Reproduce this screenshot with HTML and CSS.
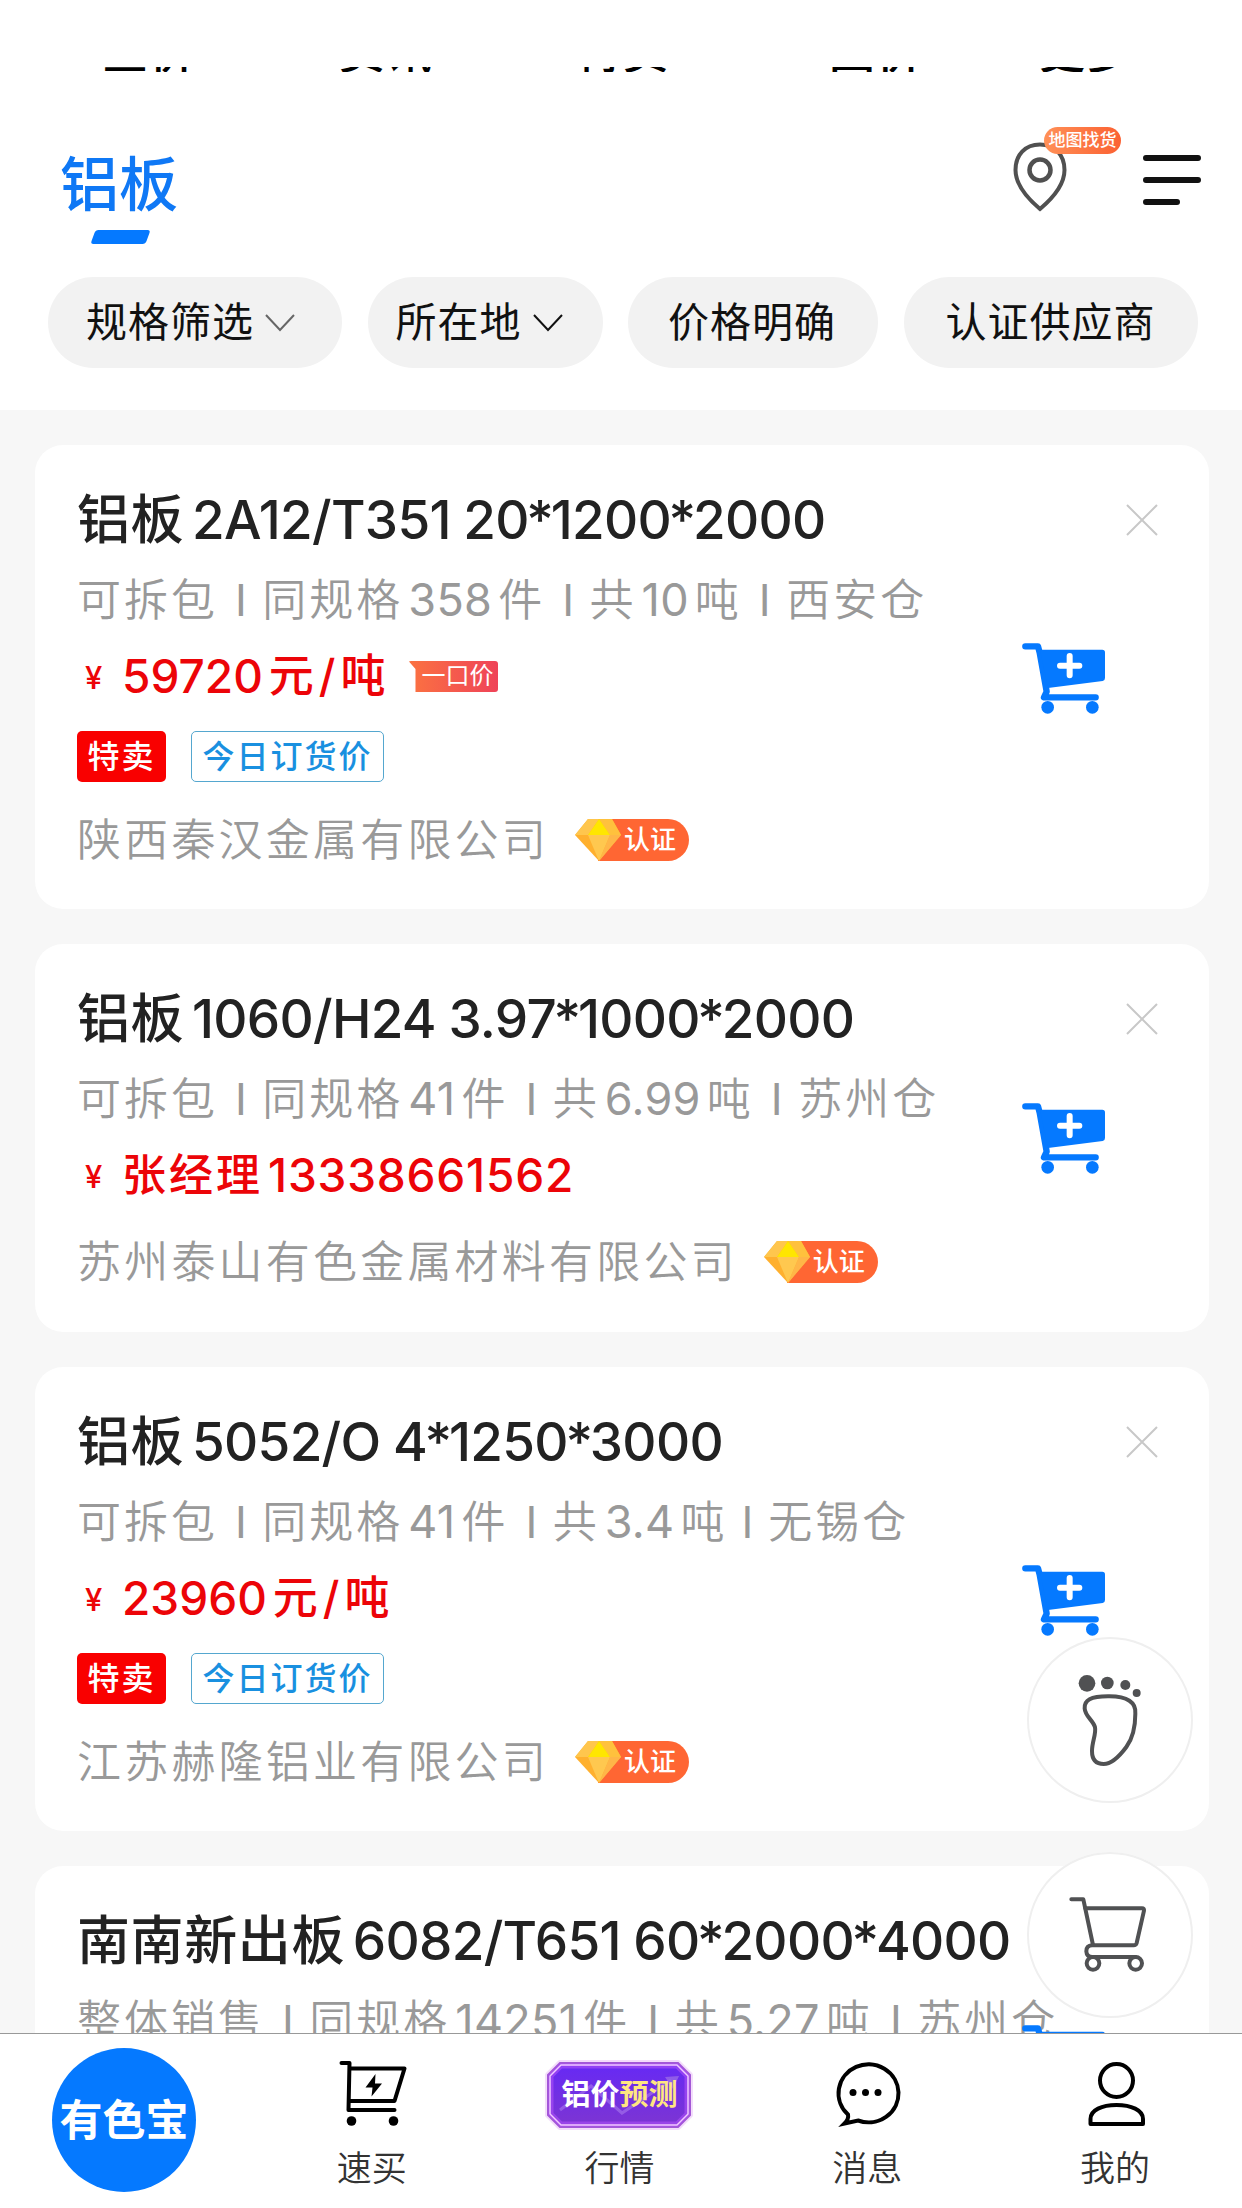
FILE: index.html
```html
<!DOCTYPE html>
<html lang="zh-CN">
<head>
<meta charset="utf-8">
<title>铝板</title>
<link rel="stylesheet" href="styles.css">
</head>
<body>
<svg width="0" height="0" class="defs">
  <defs>
    <symbol id="cart-add" viewBox="0 0 249 211">
      <path d="M10 9H48L53 28L74 145L66 162H221" fill="none" stroke="#0579ff" stroke-width="19" stroke-linecap="round" stroke-linejoin="round"/>
      <path d="M54 19H241Q249 19 249 27V104Q249 112 242 113L78 134Z" fill="#0579ff"/>
      <circle cx="77" cy="192" r="19" fill="#0579ff"/><circle cx="211" cy="192" r="19" fill="#0579ff"/>
      <path d="M143 38V96M114 67H172" stroke="#fff" stroke-width="18" stroke-linecap="round"/>
    </symbol>
    <symbol id="close" viewBox="0 0 32 32"><path d="M1 1L31 31M31 1L1 31" stroke="#c8c8c8" stroke-width="2"/></symbol>
    <symbol id="gem" viewBox="0 0 46 42">
      <path d="M13 0H37L46 16L24 42L0 16Z" fill="#ffb02e"/>
      <path d="M13 0L0 16H13L24 0Z" fill="#ffc64d"/><path d="M24 0H37L46 16H35Z" fill="#ffc13d"/>
      <path d="M24 0L35 16H13Z" fill="#ffe600"/><path d="M13 16H35L24 42Z" fill="#ffc84f"/>
      <path d="M35 16H46L24 42Z" fill="#ffb648"/>
    </symbol>
    <symbol id="chevron" viewBox="0 0 30 18"><path d="M1 1L15 16L29 1" fill="none" stroke="currentColor" stroke-width="2"/></symbol>
  </defs>
</svg>
<div class="app">
  <nav class="tabs"><span>查价</span><span>资讯</span><span>特卖</span><span>回价</span><span>更多</span></nav>
  <header class="header">
    <h1 class="category">铝板</h1>
    <div class="tools">
      <div class="map">
        <svg width="54" height="70" viewBox="0 0 54 70"><path d="M27 2.500C12 2.500 2.500 13 2.500 28C2.500 42 14 56 27 67C40 56 51.500 42 51.500 28C51.500 13 42 2.500 27 2.500Z" fill="none" stroke="#505050" stroke-width="4"/><circle cx="27" cy="28" r="10.500" fill="none" stroke="#505050" stroke-width="4.500"/></svg>
        <span class="map-badge">地图找货</span>
      </div>
      <svg class="menu" width="58" height="52" viewBox="0 0 58 52"><path d="M3 4H55M3 26H55M3 48H34" stroke="#111" stroke-width="6" stroke-linecap="round"/></svg>
    </div>
  </header>
  <div class="filters">
    <button class="chip chip-spec">规格筛选<svg class="chev soft"><use href="#chevron"/></svg></button>
    <button class="chip chip-place">所在地<svg class="chev"><use href="#chevron"/></svg></button>
    <button class="chip chip-price">价格明确</button>
    <button class="chip chip-cert">认证供应商</button>
  </div>
  <main class="list">
    <article class="card">
      <div class="body">
        <div class="head"><h2 class="title">铝板 <span>2A12/T351 20<i>*</i>1200<i>*</i>2000</span></h2><svg class="close"><use href="#close"/></svg></div>
        <p class="meta m1">可拆包<i>I</i>同规格<b>358</b>件<i>I</i>共<b>10</b>吨<i>I</i>西安仓</p>
        <p class="price"><small>¥</small><span class="amount">59720</span><span class="unit">元/吨</span><span class="fixed">一口价</span></p>
        <div class="tags"><span class="tag sale">特卖</span><span class="tag today">今日订货价</span></div>
        <div class="company">陕西秦汉金属有限公司<span class="cert"><svg class="gem"><use href="#gem"/></svg>认证</span></div>
      </div>
      <svg class="add"><use href="#cart-add"/></svg>
    </article>
    <article class="card">
      <div class="body">
        <div class="head"><h2 class="title">铝板 <span>1060/H24 3.97<i>*</i>1000<i>*</i>2000</span></h2><svg class="close"><use href="#close"/></svg></div>
        <p class="meta m2">可拆包<i>I</i>同规格<b>41</b>件<i>I</i>共<b>6.99</b>吨<i>I</i>苏州仓</p>
        <p class="price"><small>¥</small><span class="unit contact">张经理</span><span class="amount phone">13338661562</span></p>
        <div class="company">苏州泰山有色金属材料有限公司<span class="cert"><svg class="gem"><use href="#gem"/></svg>认证</span></div>
      </div>
      <svg class="add"><use href="#cart-add"/></svg>
    </article>
    <article class="card">
      <div class="body">
        <div class="head"><h2 class="title">铝板 <span>5052/O 4<i>*</i>1250<i>*</i>3000</span></h2><svg class="close"><use href="#close"/></svg></div>
        <p class="meta m3">可拆包<i>I</i>同规格<b>41</b>件<i>I</i>共<b>3.4</b>吨<i>I</i>无锡仓</p>
        <p class="price"><small>¥</small><span class="amount">23960</span><span class="unit">元/吨</span></p>
        <div class="tags"><span class="tag sale">特卖</span><span class="tag today">今日订货价</span></div>
        <div class="company">江苏赫隆铝业有限公司<span class="cert"><svg class="gem"><use href="#gem"/></svg>认证</span></div>
      </div>
      <svg class="add"><use href="#cart-add"/></svg>
    </article>
    <article class="card last">
      <div class="body">
        <div class="head"><h2 class="title">南南新出板 <span>6082/T651 60<i>*</i>2000<i>*</i>4000</span></h2></div>
        <p class="meta m4">整体销售<i>I</i>同规格<b>14251</b>件<i>I</i>共<b>5.27</b>吨<i>I</i>苏州仓</p>
      </div>
      <svg class="add"><use href="#cart-add"/></svg>
    </article>
  </main>
  <nav class="bar">
    <a class="item"><span class="logo">有色宝</span></a>
    <a class="item"><svg class="icon" width="70" height="68" viewBox="-1.500 0 70 68"><g fill="none" stroke="#000" stroke-width="4" stroke-linejoin="round" stroke-linecap="round"><path d="M3 3H11L10 50H56"/><path d="M12 8.500H66L56 41H11"/></g><circle cx="13" cy="61" r="4.800"/><circle cx="55" cy="61" r="4.800"/><path d="M37 14L27 27.500H34L33 36.500L43.500 23.500H36.500Z"/></svg>速买</a>
    <a class="item"><span class="forecast icon"><svg class="forecast-bg" width="152" height="74" viewBox="-4 -4 152 74"><defs><linearGradient id="violet" x1="0" y1="0" x2="0" y2="1"><stop offset="0" stop-color="#6629f5"/><stop offset="1" stop-color="#7d35d2"/></linearGradient></defs><path d="M13 1H131L143 13V53L131 65H13L1 53V13Z" fill="url(#violet)" stroke="#f3dcfb" stroke-width="6" stroke-linejoin="round"/><path d="M13 1H131L143 13V53L131 65H13L1 53V13Z" fill="url(#violet)" stroke="#a358d6" stroke-width="2"/><path d="M14 4H130L140 14V52L130 62H14L4 52V14Z" fill="none" stroke="#ad50f7" stroke-width="5" opacity=".6"/><path d="M14 3H130L141 14V52L130 63H14L3 52V14Z" fill="none" stroke="#f3c9ff" stroke-width="1.500"/><path d="M13 48L44 24L75 51L124 18" fill="none" stroke="#a878ec" stroke-width="3" opacity=".6"/><path d="M118 15L132 14L126 27Z" fill="#9a69e6" opacity=".8"/></svg><span class="forecast-text">铝价<em>预测</em></span></span>行情</a>
    <a class="item"><svg class="icon" width="70" height="68" viewBox="2 0 70 68"><path d="M18 54.500A30 29 0 1 1 28 60.500L14.500 63.500Q19 59 18 54.500Z" fill="none" stroke="#000" stroke-width="4"/><circle cx="23" cy="32.500" r="3.500"/><circle cx="35.500" cy="32.500" r="3.500"/><circle cx="48" cy="32.500" r="3.500"/></svg>消息</a>
    <a class="item"><svg class="icon" width="70" height="68" viewBox="-2 0 70 68"><g fill="none" stroke="#000" stroke-width="4"><circle cx="34.500" cy="20.500" r="16.500"/><path d="M8.500 64V59C8.500 50 20 45 34.500 45S61 50 61 59V64Z" stroke-linejoin="round"/></g></svg>我的</a>
  </nav>
  <a class="fab fab-history"><svg viewBox="0 0 498 498"><g fill="#505153"><circle cx="180" cy="139" r="25"/><circle cx="241" cy="138" r="19"/><circle cx="295" cy="144" r="15"/><circle cx="329" cy="168" r="12"/></g><path d="M173 214C172 190 190 178 243 178C302 177 328 197 325 230C325 265 320 300 298 330C275 361 253 381 230 381C205 381 195 365 195 342C195 315 208 290 204 271C199 250 174 238 173 214Z" fill="none" stroke="#505153" stroke-width="12"/></svg></a>
  <a class="fab fab-cart"><svg viewBox="0 0 498 498"><g fill="none" stroke="#505153" stroke-width="12" stroke-linejoin="round" stroke-linecap="round"><path d="M133 142H169L198 279"/><path d="M175 169H345Q352 169 351 176L329 273Q327 280 320 280H195Q178 281 178 298Q179 315 196 315H326"/><circle cx="198" cy="334" r="19"/><circle cx="326" cy="334" r="19"/></g></svg></a>
</div>
</body>
</html>
```
FILE: styles.css
```css
* { box-sizing: border-box; }
body { margin: 0; font-family: Inter, "Noto Sans CJK SC", sans-serif; background: #fff; color: #111; }
h1, h2, p { margin: 0; font-weight: 500; }
.defs { position: absolute; }
.app { position: relative; width: 1242px; height: 2208px; overflow: hidden; display: flex; flex-direction: column; padding-top: 67px; }

.tabs { flex: none; height: 5px; overflow: hidden; display: grid; grid-template-columns: 237px 236px 254px 210px 1fr; align-content: end; padding-left: 102px; font-size: 46px; line-height: 60px; font-weight: 500; letter-spacing: 1px; color: #000; }
.tabs span { height: 51px; }

.header { flex: none; height: 205px; display: flex; justify-content: space-between; padding: 0 41px 0 60px; }
.category { margin-top: 71px; font-size: 59px; line-height: 84px; height: 103px; color: #0f78f5; display: flex; flex-direction: column; }
.category::after { content: ""; flex: none; width: 55px; height: 14px; margin: 3px 0 0 33px; border-radius: 3px; background: #0579ff; transform: skewX(-20deg); }
.tools { display: flex; gap: 76px; }
.map { position: relative; margin-top: 70px; }
.map svg, .menu { display: block; }
.map-badge { position: absolute; left: 31px; top: -15px; width: 77px; height: 27px; border-radius: 14px; background: linear-gradient(90deg, #ff9057, #fb6132); color: #fff; font-size: 17px; font-weight: 500; line-height: 27px; text-align: center; white-space: nowrap; }
.menu { margin-top: 82px; }

.filters { flex: none; height: 133px; display: flex; padding: 0 44px 0 48px; gap: 25.500px; align-items: flex-start; }
.chip { flex: none; height: 91px; border: 0; border-radius: 46px; background: #f2f2f2; color: #111; font: 400 41px/91px Inter, "Noto Sans CJK SC", sans-serif; letter-spacing: 1px; padding: 0; display: flex; align-items: center; white-space: nowrap; }
.chip-spec { width: 294px; padding-left: 38px; }
.chip-place { width: 235px; padding-left: 28px; }
.chip-price { width: 250px; padding-left: 40px; }
.chip-cert { width: 294px; padding-left: 42px; }
.chev { width: 30px; height: 18px; margin-left: 11px; }
.soft { color: #666; }

.list { flex: 1; min-height: 0; overflow: hidden; background: #f7f7f7; padding: 35px 33px 0 35px; display: flex; flex-direction: column; gap: 35px; }
.card { flex: none; display: grid; grid-template-columns: minmax(0, 1fr); background: #fff; border-radius: 28px; padding: 38px 51px 39px 42px; }
.last { height: 387px; }
.body, .add { grid-area: 1 / 1; }
.add { width: 83px; height: 71px; justify-self: end; align-self: center; margin: 3px 53px 0 0; }
.head { display: flex; justify-content: space-between; align-items: center; }
.title { font-size: 53px; line-height: 74px; color: #222; white-space: nowrap; letter-spacing: .6px; word-spacing: -7px; font-feature-settings: "calt" 0; }
.title span { letter-spacing: -.68px; word-spacing: -1px; }
.title i { font-style: normal; margin: 0 -2.500px; }
.close { width: 32px; height: 32px; }
.meta { margin-top: 3px; font-size: 44px; line-height: 80px; letter-spacing: 3px; color: #999; font-weight: 350; white-space: nowrap; display: flex; }
.meta i { font-style: normal; font-weight: 400; margin: 0 12.500px 0 17px; }
.meta b { font-weight: 400; font-size: 45px; letter-spacing: .3px; margin: 0 6px 0 5px; }
.m3 i:last-of-type { margin: 0 12px 0 14px; }
.price { height: 75px; margin: -1px 0 0; line-height: 74px; display: flex; align-items: flex-start; color: #ec0408; font-size: 46px; white-space: nowrap; }
.price small { width: 45px; font-size: 31px; padding: 2px 0 0 8px; }
.unit { font-size: 45px; letter-spacing: 5px; margin-left: 6px; }
.contact { margin: 0 5px 0 0; font-size: 44px; letter-spacing: 3px; }
.phone { letter-spacing: .8px; }
.fixed { width: 90px; height: 31px; margin: 22px 0 0 18px; padding-left: 13px; color: #fff; font-size: 24px; line-height: 30px; font-weight: 400; background: linear-gradient(90deg, #fb7341, #ef4358); clip-path: polygon(0 0, 100% 0, 100% 100%, 7px 100%, 7px 8px); border-radius: 3px; }
.tags { display: flex; gap: 25px; margin-top: 17px; }
.tag { height: 51px; border-radius: 5px; font-size: 32px; line-height: 51px; font-weight: 500; letter-spacing: 2px; text-align: center; white-space: nowrap; }
.sale { width: 89px; background: #f90000; color: #fff; }
.today { width: 193px; border: 1.500px solid #55a7cf; color: #1990e0; line-height: 49px; }
.company { margin-top: 19px; height: 60px; display: flex; align-items: center; font-size: 44px; letter-spacing: 3.200px; line-height: 60px; color: #999; font-weight: 350; white-space: nowrap; }
.tags + .company { margin-top: 28px; }
.card:nth-child(2) { padding-bottom: 40px; }
.cert { width: 114px; height: 42px; margin-left: 26px; display: flex; align-items: center; border-radius: 21px; background: linear-gradient(90deg, transparent 23px, #ff6633 23px); color: #fff; font-size: 26px; line-height: 42px; letter-spacing: 0; font-weight: 500; }
.gem { width: 46px; height: 42px; margin-right: 3px; }

.bar { flex: none; height: 175px; border-top: 1px solid #999; display: grid; grid-template-columns: repeat(5, 1fr); padding-right: 3px; background: #fff; }
.item { display: flex; flex-direction: column; align-items: center; font-size: 35px; line-height: 50px; color: #333; font-weight: 350; }
.icon { flex: none; margin: 26px 0 15px; display: block; overflow: visible; }
.logo { width: 144px; height: 144px; margin-top: 14px; border-radius: 50%; background: #0579ff; color: #fff; font-size: 43px; line-height: 144px; font-weight: 700; text-align: center; white-space: nowrap; }
.forecast { display: grid; justify-items: center; align-items: center; height: 68px; margin: 24px 0 17px; }
.forecast-bg, .forecast-text { grid-area: 1 / 1; }
.forecast-text { font-size: 29px; line-height: 60px; font-weight: 700; color: #fff; }
.forecast-text em { font-style: normal; color: #ffe680; }

.fab { position: absolute; left: 1027px; width: 166px; height: 166px; border-radius: 50%; background: #fff; box-shadow: inset 0 0 0 2px #efefef; }
.fab svg { display: block; width: 166px; height: 166px; }
.fab-history { top: 1637px; }
.fab-cart { top: 1852px; }
```
